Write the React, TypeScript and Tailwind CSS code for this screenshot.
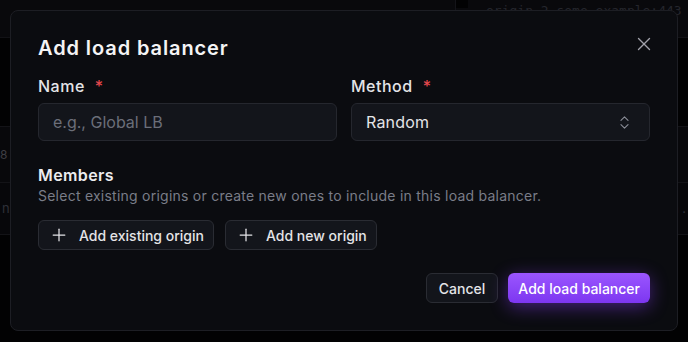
import React from "react";
import { X, Plus, ChevronsUpDown } from "lucide-react";

export default function App() {
  const font = { fontFamily: "Inter, 'Noto Sans', sans-serif" };
  return (
    <div
      className="relative w-[688px] h-[342px] overflow-hidden bg-[#030304]"
      style={font}
    >
      {/* Background page (dimmed) */}
      <div className="flex flex-col w-full h-full">
        <div className="h-[38px] bg-[#09090c] flex border-b border-[#121216]">
          <div className="flex-1" />
          <div className="w-px bg-[#141419]" />
          <div className="w-[12px] h-[8px] bg-[#020203]" />
          <div
            className="w-[220px] pl-[18px] pt-[3px] text-[13px] leading-[16px] text-[#25262c] whitespace-nowrap"
            style={{ fontFamily: "'DejaVu Sans Mono', monospace" }}
          >
            origin-2.some.example:443
          </div>
        </div>
        <div className="h-[88px] bg-[#020203]" />
        <div className="h-[57px] bg-[#08080b] border-t border-b border-[#131317] flex items-center">
          <span className="text-[12px] text-[#3e3e44] ml-0">8</span>
        </div>
        <div className="h-[52px] bg-[#07070a] border-b border-[#131317] flex items-center justify-between">
          <span className="text-[13px] text-[#2e2f38] ml-[2px]">n</span>
          <span className="text-[13px] text-[#2e2f38] mr-[2px]">n .</span>
        </div>
        <div className="flex-1 bg-[#020203]" />
      </div>

      {/* Modal */}
      <div className="absolute left-[10px] top-[10px] w-[668px] h-[321px] rounded-[8px] border border-[#1d1e24] bg-[#0b0c10] px-[27px] pt-[23px]">
        <button className="absolute right-[22px] top-[22px] text-[#a1a1aa]">
          <X size={22} strokeWidth={1.5} />
        </button>
        <h2 className="text-[20px] leading-[28px] font-semibold tracking-[0.9px] text-[#f4f4f5]">
          Add load balancer
        </h2>
        <div className="grid grid-cols-2 gap-[14px] mt-[12px]">
          <div className="flex flex-col">
            <label className="text-[16px] leading-[24px] font-medium tracking-[0.5px] text-[#e4e4e7] flex">
              Name<span className="ml-[10px] text-[#e5484d]">*</span>
            </label>
            <div className="mt-[5px] h-[38px] rounded-[6px] border border-[#25272e] bg-[#13151b] px-[14px] flex items-center text-[16px] text-[#6b6e79]">
              e.g., Global LB
            </div>
          </div>
          <div className="flex flex-col">
            <label className="text-[16px] leading-[24px] font-medium tracking-[0.5px] text-[#e4e4e7] flex">
              Method<span className="ml-[10px] text-[#e5484d]">*</span>
            </label>
            <div className="mt-[5px] h-[38px] rounded-[6px] border border-[#25272e] bg-[#13151b] pl-[14px] pr-[16px] flex items-center justify-between text-[16px] tracking-[0.2px] text-[#e4e4e7]">
              <span>Random</span>
              <ChevronsUpDown size={17} strokeWidth={1.5} className="text-[#8b8e98]" />
            </div>
          </div>
        </div>
        <div className="mt-[23px] text-[16px] leading-[22px] font-semibold tracking-[0.4px] text-[#ececef]">
          Members
        </div>
        <div className="text-[14px] leading-[20px] tracking-[0.24px] text-[#7a7d88]">
          Select existing origins or create new ones to include in this load balancer.
        </div>
        <div className="mt-[14px] flex gap-[11px]">
          <button className="h-[30px] rounded-[6px] border border-[#2a2c33] bg-[#13151b] pl-[10px] pr-[9px] flex items-center gap-[10px] text-[14px] font-medium text-[#e4e4e7]">
            <Plus size={20} strokeWidth={1.5} />
            Add existing origin
          </button>
          <button className="h-[30px] rounded-[6px] border border-[#2a2c33] bg-[#13151b] pl-[10px] pr-[9px] flex items-center gap-[10px] text-[14px] font-medium text-[#e4e4e7]">
            <Plus size={20} strokeWidth={1.5} />
            Add new origin
          </button>
        </div>
        <div className="mt-[23px] flex justify-end gap-[10px]">
          <button className="h-[30px] rounded-[6px] border border-[#2a2c33] bg-[#13151b] px-[12px] text-[14px] font-medium text-[#e4e4e7]">
            Cancel
          </button>
          <button className="h-[30px] rounded-[6px] bg-gradient-to-b from-[#9b55ff] to-[#7d36f0] px-[10px] text-[14px] font-medium text-white shadow-[0_4px_18px_rgba(139,61,255,0.45)]">
            Add load balancer
          </button>
        </div>
      </div>
    </div>
  );
}
